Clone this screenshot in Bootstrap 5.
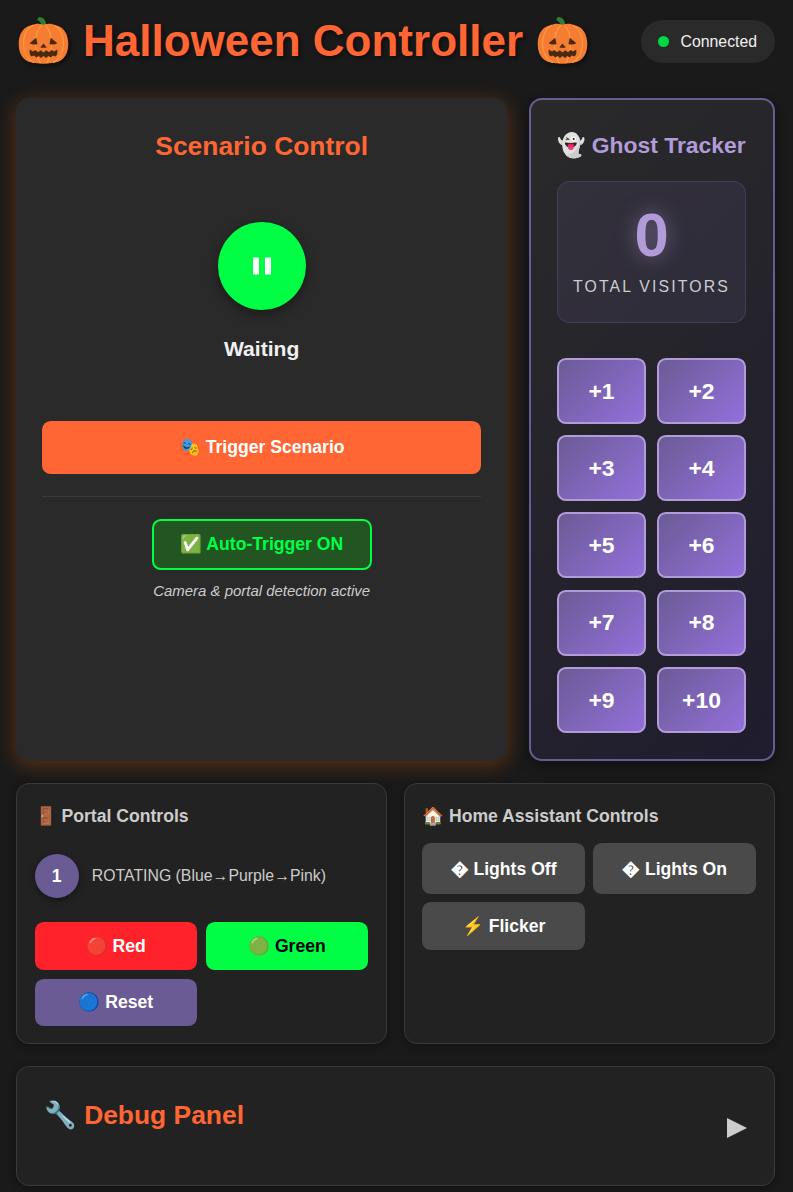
<!DOCTYPE html>
<html lang="en" data-bs-theme="dark">
<head>
<meta charset="utf-8">
<meta name="viewport" content="width=device-width, initial-scale=1">
<title>Halloween Controller</title>
<link href="https://cdn.jsdelivr.net/npm/bootstrap@5.3.0/dist/css/bootstrap.min.css" rel="stylesheet">
<style>
body{background:#1a1a1a;color:#f0f0f0;font-family:"Liberation Sans",sans-serif;font-size:17.6px;line-height:1.5;overflow:hidden}
.page{padding:13px 18px 6px 16px}
.top-bar{height:56px}
.app-title{font-size:44px;font-weight:700;color:#ff6633;text-shadow:2px 2px 4px rgba(0,0,0,.5);white-space:nowrap;line-height:56px;padding-left:2px;gap:14px}
.pumpkin{width:51px;height:50px;filter:drop-shadow(2px 2px 2px rgba(0,0,0,.5))}
.status-pill{background:#2a2a2a;height:43px;width:134px;padding-left:17px;border-radius:22px;font-size:15.84px;gap:11.5px}
.status-pill span:last-child{padding-top:1px}
.status-dot{width:11px;height:11px;border-radius:50%;background:#00d93f}
.main-grid{display:grid;grid-template-columns:2fr 1fr;gap:22px;margin-top:29px;height:663px}
.pair-grid{display:grid;grid-template-columns:1fr 1fr;gap:17.6px;margin-top:22px;height:261px}
.two-up{display:grid;grid-template-columns:1fr 1fr}
.scenario{background:#2a2a2a;border-radius:13px;padding:0 26.4px;box-shadow:0 4px 20px rgba(255,107,0,.3)}
.section-title{font-size:26.4px;font-weight:700;color:#ff6633;line-height:34px}
.scenario .section-title{margin-top:31px}
.pause-disc{width:88px;height:88px;background:#00ff44;border-radius:50%;margin-top:59px;box-shadow:0 4px 12px rgba(0,0,0,.4)}
.state-name{font-size:21.12px;font-weight:700;line-height:30px;margin-top:24px}
.btn{--bs-btn-font-size:17.6px;--bs-btn-font-weight:700;--bs-btn-border-width:0;--bs-btn-border-radius:8.8px;--bs-btn-padding-x:0;--bs-btn-padding-y:0;--bs-btn-color:#fff;line-height:1.5;white-space:nowrap}
.btn-trigger{background:#ff6633;height:53px;margin-top:57px}
.rule{border-top:1px solid #3a3a3a;margin-top:22px}
.btn-auto{background:#235523;border:2px solid #00ff44;color:#00ff44;width:220px;height:51px;margin-top:22px}
.hint{font-size:14.96px;font-style:italic;color:#ccc;line-height:22px;margin-top:10px}
.ghost{background:linear-gradient(135deg,#2a2a2a,#1f1d2e);border:2px solid #6b5b95;border-radius:13px;padding:0 27px 0 25.7px;box-shadow:0 4px 12px rgba(0,0,0,.4)}
.ghost-title{font-size:22.88px;font-weight:700;color:#b19cd9;line-height:32px;margin-top:29px;white-space:nowrap}
.tally{height:142px;margin-top:20px;border:1px solid rgba(107,91,149,.35);border-radius:13px;background:rgba(107,91,149,.15)}
.tally-num{font-size:61.6px;font-weight:700;line-height:62px;color:#b19cd9;text-shadow:0 0 20px rgba(177,156,217,.5);margin-top:22px}
.tally-label{font-size:15.84px;letter-spacing:2.15px;color:#ccc;line-height:24px;margin-top:9px;white-space:nowrap}
.plus-grid{gap:11.2px 11px;margin-top:35px}
.btn-plus{height:66px;background:linear-gradient(135deg,#6b5b95,#9370db);border:2px solid #b19cd9;font-size:22.88px}
.panel{background:#222;border:1px solid #3a3a3a;border-radius:13px;padding:0 17.6px;box-shadow:0 2px 8px rgba(0,0,0,.3)}
.panel-home{padding:0 18px 0 16.8px}
.panel-title{font-size:17.6px;font-weight:700;color:#ccc;line-height:26px;margin-top:19px}
.portal-num{width:44px;height:44px;border-radius:50%;background:#6b5b95;font-weight:700;color:#fff;box-shadow:0 2px 6px rgba(0,0,0,.4)}
.portal-row{margin-top:25px;gap:13.2px}
.portal-text{font-size:15.84px;color:#ccc}
.color-grid{gap:8.8px;margin-top:24px}
.color-grid .btn{height:48px}
.btn-grey{background:#4a4a4a}
.debug{height:120px;margin-top:22px;padding:0 27.4px 0 26.8px}
</style>
</head>
<body>
<svg class="d-none">
  <symbol id="pumpkin" viewBox="0 0 51 50">
    <path d="M19.6 4.2c-.6-1.6.8-3.4 2.6-3.1 4 .8 6.300 4 6.200 9.600l-4.700.6c-.1-3.500-1.300-5.700-4.100-7.100z" fill="#2e7d32"/>
    <path d="M25.500 8.800c4-1.600 8-1.400 11 .2C45.500 10 50.300 18 50.300 28c0 13-7.300 18.500-16.300 19-5.500 1-11.500 1-17 0C8 46.500.7 41 .7 28 .7 18 5.500 10 14.500 9c3-1.600 7-1.800 11-.2z" fill="#f57c33"/>
    <g fill="none" stroke="#ff9d3a" stroke-width="1.100">
      <path d="M15 9C8 13 5.500 20 5.500 28S9 43 16 46.700M36 9c7 4 9.500 11 9.500 19S42 43 35 46.700M23.500 9.500C18.500 14 17.500 20 17.500 28s1.500 14.500 5 19.300M27.500 9.500c5 4.500 6 10.500 6 18.500s-1.500 14.500-5 19.300"/>
    </g>
    <g fill="#4a2a0c">
      <path d="M18.200 21.800l1.300 6.200c-2.500 1-5.200.7-7.900-.7zM32.800 21.800L31.500 28c2.500 1 5.200.7 7.900-.7zM25.500 27.500l3.200 3.900c-2.200.6-4.200.6-6.400 0z"/>
      <path d="M11.800 33.500l3.200 2 2.500-1.500 2.500 2.200 2.800-1.900 2.700 2.200 2.700-2.200 2.800 1.900 2.500-2.200 2.500 1.500 3.200-2c.7 3.800-.2 6.200-1.800 7l-2.400-1-2.300 2.100-2.400-1.700-2.300 2-2.500-1.800-2.500 1.800-2.300-2-2.400 1.700-2.300-2.100-2.400 1c-1.600-.8-2.500-3.200-1.800-7z"/>
    </g>
  </symbol>
</svg>
<div class="page">
  <header class="top-bar d-flex justify-content-between align-items-center">
    <h1 class="app-title mb-0 d-flex align-items-center">
      <svg class="pumpkin" role="img" aria-label="🎃"><use href="#pumpkin"/></svg>
      <span>Halloween Controller</span>
      <svg class="pumpkin" role="img" aria-label="🎃"><use href="#pumpkin"/></svg>
    </h1>
    <div class="status-pill d-flex align-items-center"><span class="status-dot"></span><span>Connected</span></div>
  </header>

  <main class="main-grid">
    <section class="scenario d-flex flex-column text-center">
      <h2 class="section-title mb-0">Scenario Control</h2>
      <div class="pause-disc mx-auto d-flex align-items-center justify-content-center">
        <svg width="18" height="18" viewBox="0 0 18 18" fill="#fff"><path d="M0 .5h6v17H0zM12 .5h6v17h-6z"/></svg>
      </div>
      <div class="state-name">Waiting</div>
      <button class="btn btn-trigger w-100">🎭 Trigger Scenario</button>
      <div class="rule"></div>
      <button class="btn btn-auto mx-auto">✅ Auto-Trigger ON</button>
      <div class="hint">Camera &amp; portal detection active</div>
    </section>

    <section class="ghost text-center">
      <h2 class="ghost-title mb-0">👻 Ghost Tracker</h2>
      <div class="tally d-flex flex-column">
        <div class="tally-num">0</div>
        <div class="tally-label">TOTAL VISITORS</div>
      </div>
      <div class="plus-grid two-up">
        <button class="btn btn-plus">+1</button><button class="btn btn-plus">+2</button>
        <button class="btn btn-plus">+3</button><button class="btn btn-plus">+4</button>
        <button class="btn btn-plus">+5</button><button class="btn btn-plus">+6</button>
        <button class="btn btn-plus">+7</button><button class="btn btn-plus">+8</button>
        <button class="btn btn-plus">+9</button><button class="btn btn-plus">+10</button>
      </div>
    </section>
  </main>

  <div class="pair-grid">
    <section class="panel">
      <h3 class="panel-title mb-0">🚪 Portal Controls</h3>
      <div class="portal-row d-flex align-items-center">
        <span class="portal-num d-flex align-items-center justify-content-center">1</span>
        <span class="portal-text">ROTATING (Blue→Purple→Pink)</span>
      </div>
      <div class="color-grid two-up">
        <button class="btn" style="background:#ff222b">🔴 Red</button>
        <button class="btn text-black" style="background:#00ff44">🟢 Green</button>
        <button class="btn" style="background:#6b5b95;height:47px">🔵 Reset</button>
      </div>
    </section>
    <section class="panel panel-home">
      <h3 class="panel-title mb-0">🏠 Home Assistant Controls</h3>
      <div class="two-up gap-2" style="margin-top:14px">
        <button class="btn btn-grey" style="height:51px;padding-top:1px">� Lights Off</button>
        <button class="btn btn-grey" style="height:51px;padding-top:1px">� Lights On</button>
        <button class="btn btn-grey" style="height:48px">⚡ Flicker</button>
      </div>
    </section>
  </div>

  <section class="panel debug d-flex justify-content-between align-items-center">
    <h2 class="section-title" style="margin-bottom:22px">🔧 Debug Panel</h2>
    <svg width="20" height="20" viewBox="0 0 20 20" fill="#ccc" style="margin-top:4px"><path d="M0 0l20 10L0 20z"/></svg>
  </section>
</div>
<script src="https://cdn.jsdelivr.net/npm/bootstrap@5.3.0/dist/js/bootstrap.bundle.min.js"></script>
</body>
</html>
